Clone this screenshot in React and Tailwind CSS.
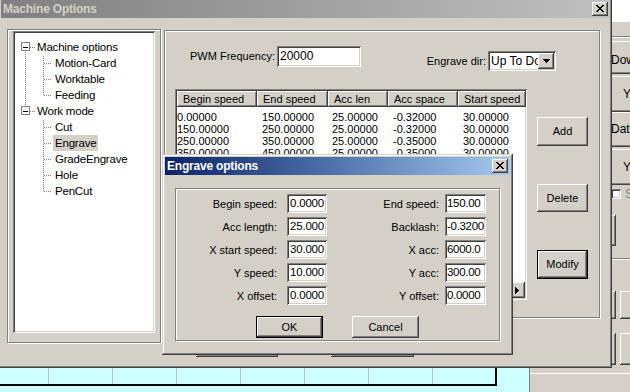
import React from 'react';

// classic 3D edges
const raised =
  'shadow-[inset_-1px_-1px_0_#404040,inset_1px_1px_0_#ffffff,inset_-2px_-2px_0_#808080,inset_2px_2px_0_#d4d0c8]';
const windowEdge =
  'shadow-[inset_-1px_-1px_0_#404040,inset_1px_1px_0_#d4d0c8,inset_-2px_-2px_0_#808080,inset_2px_2px_0_#ffffff]';
const sunken =
  'shadow-[inset_1px_1px_0_#808080,inset_-1px_-1px_0_#ffffff,inset_2px_2px_0_#404040,inset_-2px_-2px_0_#d4d0c8]';
const defaultBtn =
  'shadow-[inset_0_0_0_1px_#000000,inset_-2px_-2px_0_#404040,inset_2px_2px_0_#ffffff,inset_-3px_-3px_0_#808080]';
const etched = 'border border-[#808080] shadow-[inset_1px_1px_0_#ffffff,1px_1px_0_#ffffff]';

const treeRows = [
  { label: 'Machine options', level: 0 },
  { label: 'Motion-Card', level: 1 },
  { label: 'Worktable', level: 1 },
  { label: 'Feeding', level: 1 },
  { label: 'Work mode', level: 0 },
  { label: 'Cut', level: 1 },
  { label: 'Engrave', level: 1, selected: true },
  { label: 'GradeEngrave', level: 1 },
  { label: 'Hole', level: 1 },
  { label: 'PenCut', level: 1 },
];

const columns = [
  { title: 'Begin speed', w: 'w-[80px]', pad: 'pl-[0px]' },
  { title: 'End speed', w: 'w-[71px]', pad: 'pl-[5px]' },
  { title: 'Acc len', w: 'w-[60px]', pad: 'pl-[4px]' },
  { title: 'Acc space', w: 'w-[70px]', pad: 'pl-[5px]' },
  { title: 'Start speed', w: 'w-[68px]', pad: 'pl-[5px]' },
];

const tableRows = [
  ['0.00000', '150.00000', '25.00000', '-0.32000', '30.00000'],
  ['150.00000', '250.00000', '25.00000', '-0.32000', '30.00000'],
  ['250.00000', '350.00000', '25.00000', '-0.35000', '30.00000'],
  ['350.00000', '450.00000', '25.00000', '-0.35000', '30.00000'],
];

const fields = [
  ['Begin speed:', '0.0000', 'End speed:', '150.00'],
  ['Acc length:', '25.000', 'Backlash:', '-0.3200'],
  ['X start speed:', '30.000', 'X acc:', '6000.0'],
  ['Y speed:', '10.000', 'Y acc:', '300.00'],
  ['X offset:', '0.0000', 'Y offset:', '0.0000'],
];

function CloseBox() {
  return (
    <div className={`w-[16px] h-[14px] bg-[#d4d0c8] ${raised} flex items-start justify-start pl-[4px] pt-[3px]`}>
      <svg width="8" height="7" viewBox="0 0 8 7" shapeRendering="crispEdges">
        <path
          fill="#000"
          d="M0 0h2v1H0zM6 0h2v1H6zM1 1h2v1H1zM5 1h2v1H5zM2 2h4v1H2zM3 3h2v1H3zM2 4h4v1H2zM1 5h2v1H1zM5 5h2v1H5zM0 6h2v1H0zM6 6h2v1H6z"
        />
      </svg>
    </div>
  );
}

function Button({ children, className = '', isDefault = false }) {
  return (
    <div
      className={`bg-[#d4d0c8] flex items-center justify-center text-[11px] ${isDefault ? defaultBtn : raised} ${className}`}
    >
      {children}
    </div>
  );
}

function Tree() {
  return (
    <div className={`w-[154px] h-[314px] ${etched} pl-[5px] pt-[1px]`}>
      <div className={`relative w-[142px] h-[302px] bg-white ${sunken} p-[2px]`}>
        <svg className="absolute left-[2px] top-[2px]" width="138" height="200" shapeRendering="crispEdges">
          <g stroke="#808080" strokeDasharray="1 1">
            <line x1="10.5" y1="19" x2="10.5" y2="74" />
            <line x1="15" y1="14.5" x2="21" y2="14.5" />
            <line x1="15" y1="78.5" x2="21" y2="78.5" />
            <line x1="28.5" y1="23" x2="28.5" y2="62" />
            <line x1="28.5" y1="87" x2="28.5" y2="158" />
            {[1, 2, 3, 5, 6, 7, 8, 9].map(i => (
              <line key={i} x1="29" y1={14.5 + 16 * i} x2="37" y2={14.5 + 16 * i} />
            ))}
          </g>
          {[14, 78].map(y => (
            <g key={y}>
              <rect x="6.5" y={y - 4.5} width="8" height="8" fill="#fff" stroke="#808080" />
              <line x1="8" y1={y + 0.5} x2="13" y2={y + 0.5} stroke="#000" />
            </g>
          ))}
        </svg>
        <div className="relative pt-[6px]">
          {treeRows.map(r => (
            <div key={r.label} className={`h-[16px] flex items-center ${r.level ? 'pl-[38px]' : 'pl-[20px]'}`}>
              <span
                className={`px-[2px] h-[16px] leading-[16px] text-[11.5px] tracking-[-0.2px] ${r.selected ? 'bg-[#d4d0c8]' : ''}`}
              >
                {r.label}
              </span>
            </div>
          ))}
        </div>
      </div>
    </div>
  );
}

function ListView() {
  return (
    <div className={`w-[352px] h-[211px] bg-white ${sunken} p-[2px] flex flex-col overflow-hidden`}>
      <div className="flex h-[16px] shrink-0">
        {columns.map(c => (
          <div
            key={c.title}
            className={`${c.w} shrink-0 h-[16px] leading-[16px] pl-[6px] bg-[#d4d0c8] whitespace-nowrap ${raised}`}
          >
            {c.title}
          </div>
        ))}
      </div>
      <div className="pt-[4px]">
        {tableRows.map((row, i) => (
          <div key={i} className="flex h-[12px] leading-[12px]">
            {row.map((v, j) => (
              <div key={j} className={`${columns[j].w} ${columns[j].pad} shrink-0 whitespace-nowrap`}>
                {v}
              </div>
            ))}
          </div>
        ))}
      </div>
      <div className="mt-auto flex h-[16px] shrink-0">
        <div className="flex-1 bg-[#e6e3de]" />
        <div className={`w-[16px] h-[16px] bg-[#d4d0c8] ${raised} flex items-center justify-center`}>
          <svg width="4" height="7" viewBox="0 0 4 7" shapeRendering="crispEdges">
            <path fill="#000" d="M0 0h1v7H0zM1 1h1v5H1zM2 2h1v3H2zM3 3h1v1H3z" />
          </svg>
        </div>
      </div>
    </div>
  );
}

function MachineOptions() {
  return (
    <div className={`absolute left-[-2px] top-[-3px] w-[614px] h-[371px] bg-[#d4d0c8] p-[3px] ${windowEdge} flex flex-col`}>
      <div className="h-[18px] shrink-0 flex items-center pl-[2px] pr-[1px] bg-linear-to-r from-[#808080] to-[#c0c0c0]">
        <span className="text-[12px] font-bold text-[#d4d0c8] tracking-[-0.2px]">Machine Options</span>
        <div className="ml-auto">
          <CloseBox />
        </div>
      </div>
      <div className="flex pl-[6px] pt-[11px]">
        <Tree />
        <div className="ml-[3px] pt-[1px] flex flex-col">
          <div className={`w-[436px] h-[288px] ${etched} flex flex-col`}>
            <div className="flex items-start h-[36px] pt-[15px] pl-[25px] pr-[43px]">
              <span className="w-[87px] leading-[21px]">PWM Frequency:</span>
              <div className={`w-[84px] h-[21px] bg-white ${sunken} pl-[3px] leading-[21px] text-[12px]`}>20000</div>
              <div className="ml-auto mt-[5px] flex items-center">
                <span className="leading-[20px] mr-[2px]">Engrave dir:</span>
                <div className={`w-[68px] h-[20px] bg-white ${sunken} p-[2px] flex`}>
                  <div className="flex-1 overflow-hidden whitespace-nowrap text-[12px] leading-[16px] pl-[1px]">Up To Down</div>
                  <div className={`w-[16px] h-[16px] bg-[#d4d0c8] ${raised} flex items-center justify-center`}>
                    <svg width="7" height="4" viewBox="0 0 7 4" shapeRendering="crispEdges">
                      <path fill="#000" d="M0 0h7v1H0zM1 1h5v1H1zM2 2h3v1H2zM3 3h1v1H3z" />
                    </svg>
                  </div>
                </div>
              </div>
            </div>
            <div className="flex pl-[10px] mt-[22px]">
              <ListView />
              <div className="ml-[10px] pt-[28px] flex flex-col gap-[38px]">
                <Button className="w-[51px] h-[29px]">Add</Button>
                <Button className="w-[51px] h-[28px]">Delete</Button>
                <Button className="w-[51px] h-[29px]" isDefault>Modify</Button>
              </div>
            </div>
          </div>
          <div className="flex pl-[32px] gap-[53px] mt-[14px]">
            <Button className="w-[82px] h-[25px]">OK</Button>
            <Button className="w-[83px] h-[25px]">Cancel</Button>
          </div>
        </div>
      </div>
    </div>
  );
}

function EngraveOptions() {
  return (
    <div className={`absolute left-[162px] top-[154px] w-[351px] h-[201px] bg-[#d4d0c8] p-[3px] ${windowEdge} flex flex-col`}>
      <div className="h-[18px] shrink-0 flex items-center pl-[2px] pr-[2px] bg-linear-to-r from-[#0a246a] to-[#a6caf0]">
        <span className="text-[12px] font-bold text-white tracking-[-0.2px]">Engrave options</span>
        <div className="ml-auto">
          <CloseBox />
        </div>
      </div>
      <div className={`mx-[10px] mt-[13px] h-[153px] ${etched} pt-[5px]`}>
        <div className="grid grid-cols-[105px_40px_106px_41px] gap-x-[6px] gap-y-[3px]">
          {fields.map(([l1, v1, l2, v2]) => (
            <React.Fragment key={l1}>
              <div className="text-right pr-[4px] leading-[20px] whitespace-nowrap">{l1}</div>
              <div className={`h-[19px] bg-white ${sunken} pl-[3px] text-[11.5px] tracking-[-0.2px] leading-[19px] overflow-hidden whitespace-nowrap`}>{v1}</div>
              <div className="text-right leading-[20px] whitespace-nowrap">{l2}</div>
              <div className={`h-[19px] bg-white ${sunken} pl-[2px] text-[11.5px] tracking-[-0.3px] leading-[19px] overflow-hidden whitespace-nowrap`}>{v2}</div>
            </React.Fragment>
          ))}
        </div>
        <div className="flex justify-center gap-[29px] mt-[10px]">
          <Button className="w-[67px] h-[22px]" isDefault>OK</Button>
          <Button className="w-[67px] h-[22px]">Cancel</Button>
        </div>
      </div>
    </div>
  );
}

function BackgroundApp() {
  return (
    <div className="absolute inset-0 flex">
      <div className="w-[529px] flex flex-col">
        <div className="h-[368px] bg-[#d4d0c8]" />
        <div className="flex-1 bg-[#ccffff]">
          <svg width="529" height="24" shapeRendering="crispEdges">
            {[48, 112, 176, 240, 304, 368, 432].map(x => (
              <line key={x} x1={x + 0.5} y1="0" x2={x + 0.5} y2="16" stroke="#c0c0c0" />
            ))}
            <rect x="0" y="16" width="497" height="2" fill="#000" />
            <rect x="495" y="0" width="2" height="18" fill="#000" />
          </svg>
        </div>
      </div>
      <div className="w-[2px] border-l border-[#808080] bg-white" />
      <div className="flex-1 flex flex-col bg-[#d4d0c8] text-[12px]">
        <div className="h-[368px] flex flex-col pl-[81px] overflow-hidden">
          <div className="h-[22px] bg-white shrink-0" />
          <div className="h-[14px] shrink-0" />
          <div className="h-[2px] border-t border-[#808080] border-b border-b-white shrink-0" />
          <div className={`h-[33px] mt-[3px] w-[60px] ${raised} leading-[38px] shrink-0`}>Down</div>
          <div className={`h-[36px] mt-[2px] w-[60px] ${raised} leading-[36px] pl-[12px] shrink-0`}>Y</div>
          <div className={`h-[35px] w-[60px] ${raised} leading-[35px] shrink-0`}>Date</div>
          <div className={`h-[36px] mt-[2px] w-[60px] ${raised} leading-[36px] pl-[12px] shrink-0`}>Y</div>
          <div className="flex items-center h-[14px] mt-[2px] shrink-0">
            <div className={`w-[10px] h-[10px] bg-white ${sunken}`} />
            <span className="ml-[4px] text-[#808080]">S</span>
          </div>
          <div className={`h-[31px] mt-[14px] ml-[-30px] w-[35px] ${raised} shrink-0`} />
          <div className="h-[2px] mt-[12px] ml-[-10px] border-t border-[#808080] border-b border-b-white shrink-0" />
          <div className="flex gap-[4px] h-[28px] mt-[31px] ml-[-30px] shrink-0">
            <div className={`w-[35px] ${raised}`} />
            <div className={`w-[40px] ${raised}`} />
          </div>
          <div className="flex gap-[4px] h-[32px] mt-[14px] ml-[-30px] shrink-0">
            <div className={`w-[35px] ${raised}`} />
            <div className={`w-[40px] ${raised}`} />
          </div>
        </div>
        <div className="flex-1 border-t border-white mt-[5px] flex justify-end items-end">
          <div className="w-[24px] h-[6px] border-t border-l border-[#404040]" />
        </div>
      </div>
    </div>
  );
}

export default function App() {
  return (
    <div className="relative w-[630px] h-[392px] overflow-hidden bg-[#d4d0c8] font-['Liberation_Sans',Arial,sans-serif] text-[11px] text-black">
      <BackgroundApp />
      <MachineOptions />
      <EngraveOptions />
    </div>
  );
}
